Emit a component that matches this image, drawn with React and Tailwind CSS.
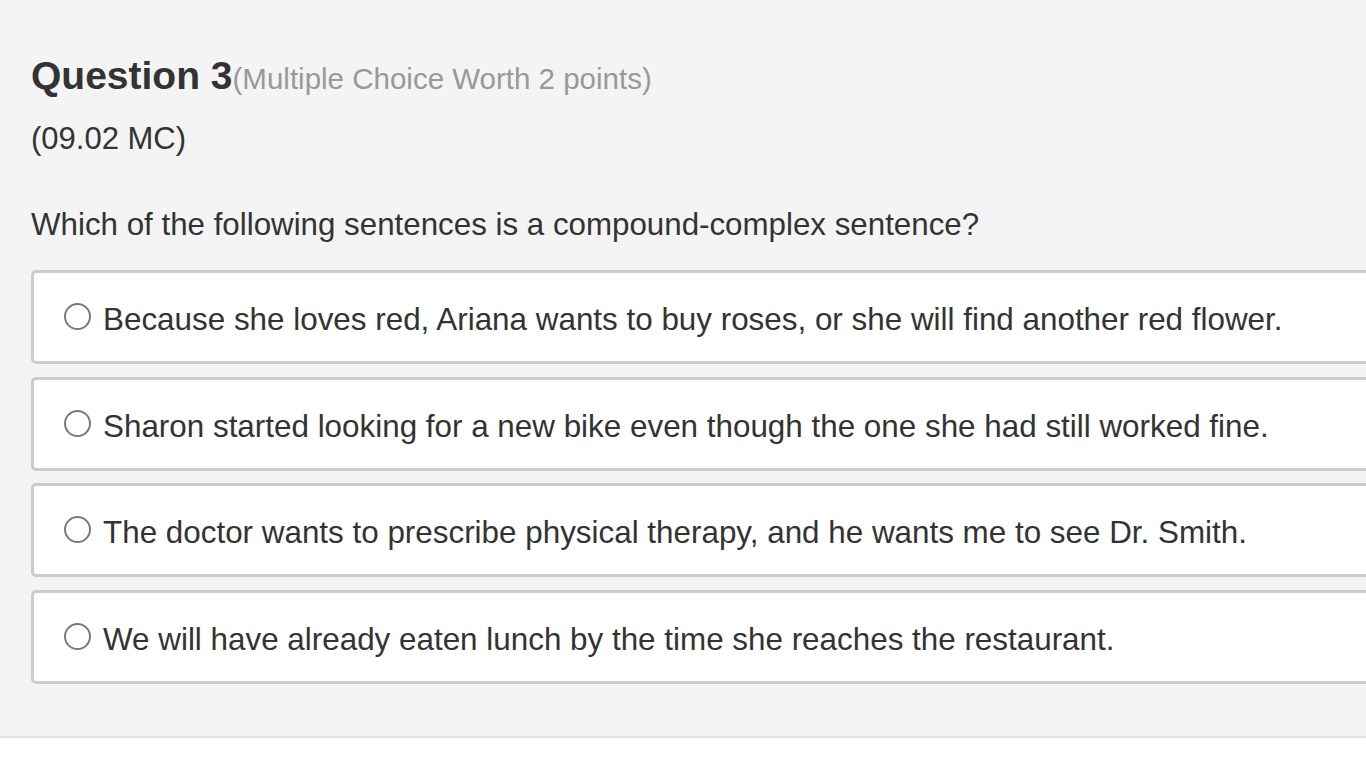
import React from "react";

const options = [
  "Because she loves red, Ariana wants to buy roses, or she will find another red flower.",
  "Sharon started looking for a new bike even though the one she had still worked fine.",
  "The doctor wants to prescribe physical therapy, and he wants me to see Dr. Smith.",
  "We will have already eaten lunch by the time she reaches the restaurant.",
];

export default function App() {
  return (
    <div
      className="w-[1366px] h-[768px] overflow-hidden bg-white text-[#333333]"
      style={{ fontFamily: '"Liberation Sans", Arial, sans-serif' }}
    >
      <div className="h-[738px] bg-[#f4f4f4] border-b-2 border-[#e4e4e4] pl-[31px] pt-[53px]">
        <div className="leading-[45px] whitespace-nowrap">
          <span className="text-[39px] font-bold text-[#333333]">Question 3</span>
          <span className="text-[29.5px] text-[#999999]">(Multiple Choice Worth 2 points)</span>
        </div>
        <div className="mt-[16px] text-[31px] leading-[34px]">(09.02 MC)</div>
        <div className="mt-[52px] text-[31.3px] leading-[34px] whitespace-nowrap">
          Which of the following sentences is a compound-complex sentence?
        </div>
        <div className="mt-[28px] flex flex-col gap-[12.5px]">
          {options.map((o) => (
            <div
              key={o}
              className="w-[1400px] h-[94px] shrink-0 bg-white border-[3px] border-[#cccccc] rounded-[5px] pl-[30px] pt-[30px] flex items-start gap-[12px]"
            >
              <span className="w-[27px] h-[27px] shrink-0 rounded-full border-[2px] border-[#7a7a7a] bg-white" />
              <span className="text-[31.4px] leading-[34px] whitespace-nowrap">{o}</span>
            </div>
          ))}
        </div>
      </div>
    </div>
  );
}
